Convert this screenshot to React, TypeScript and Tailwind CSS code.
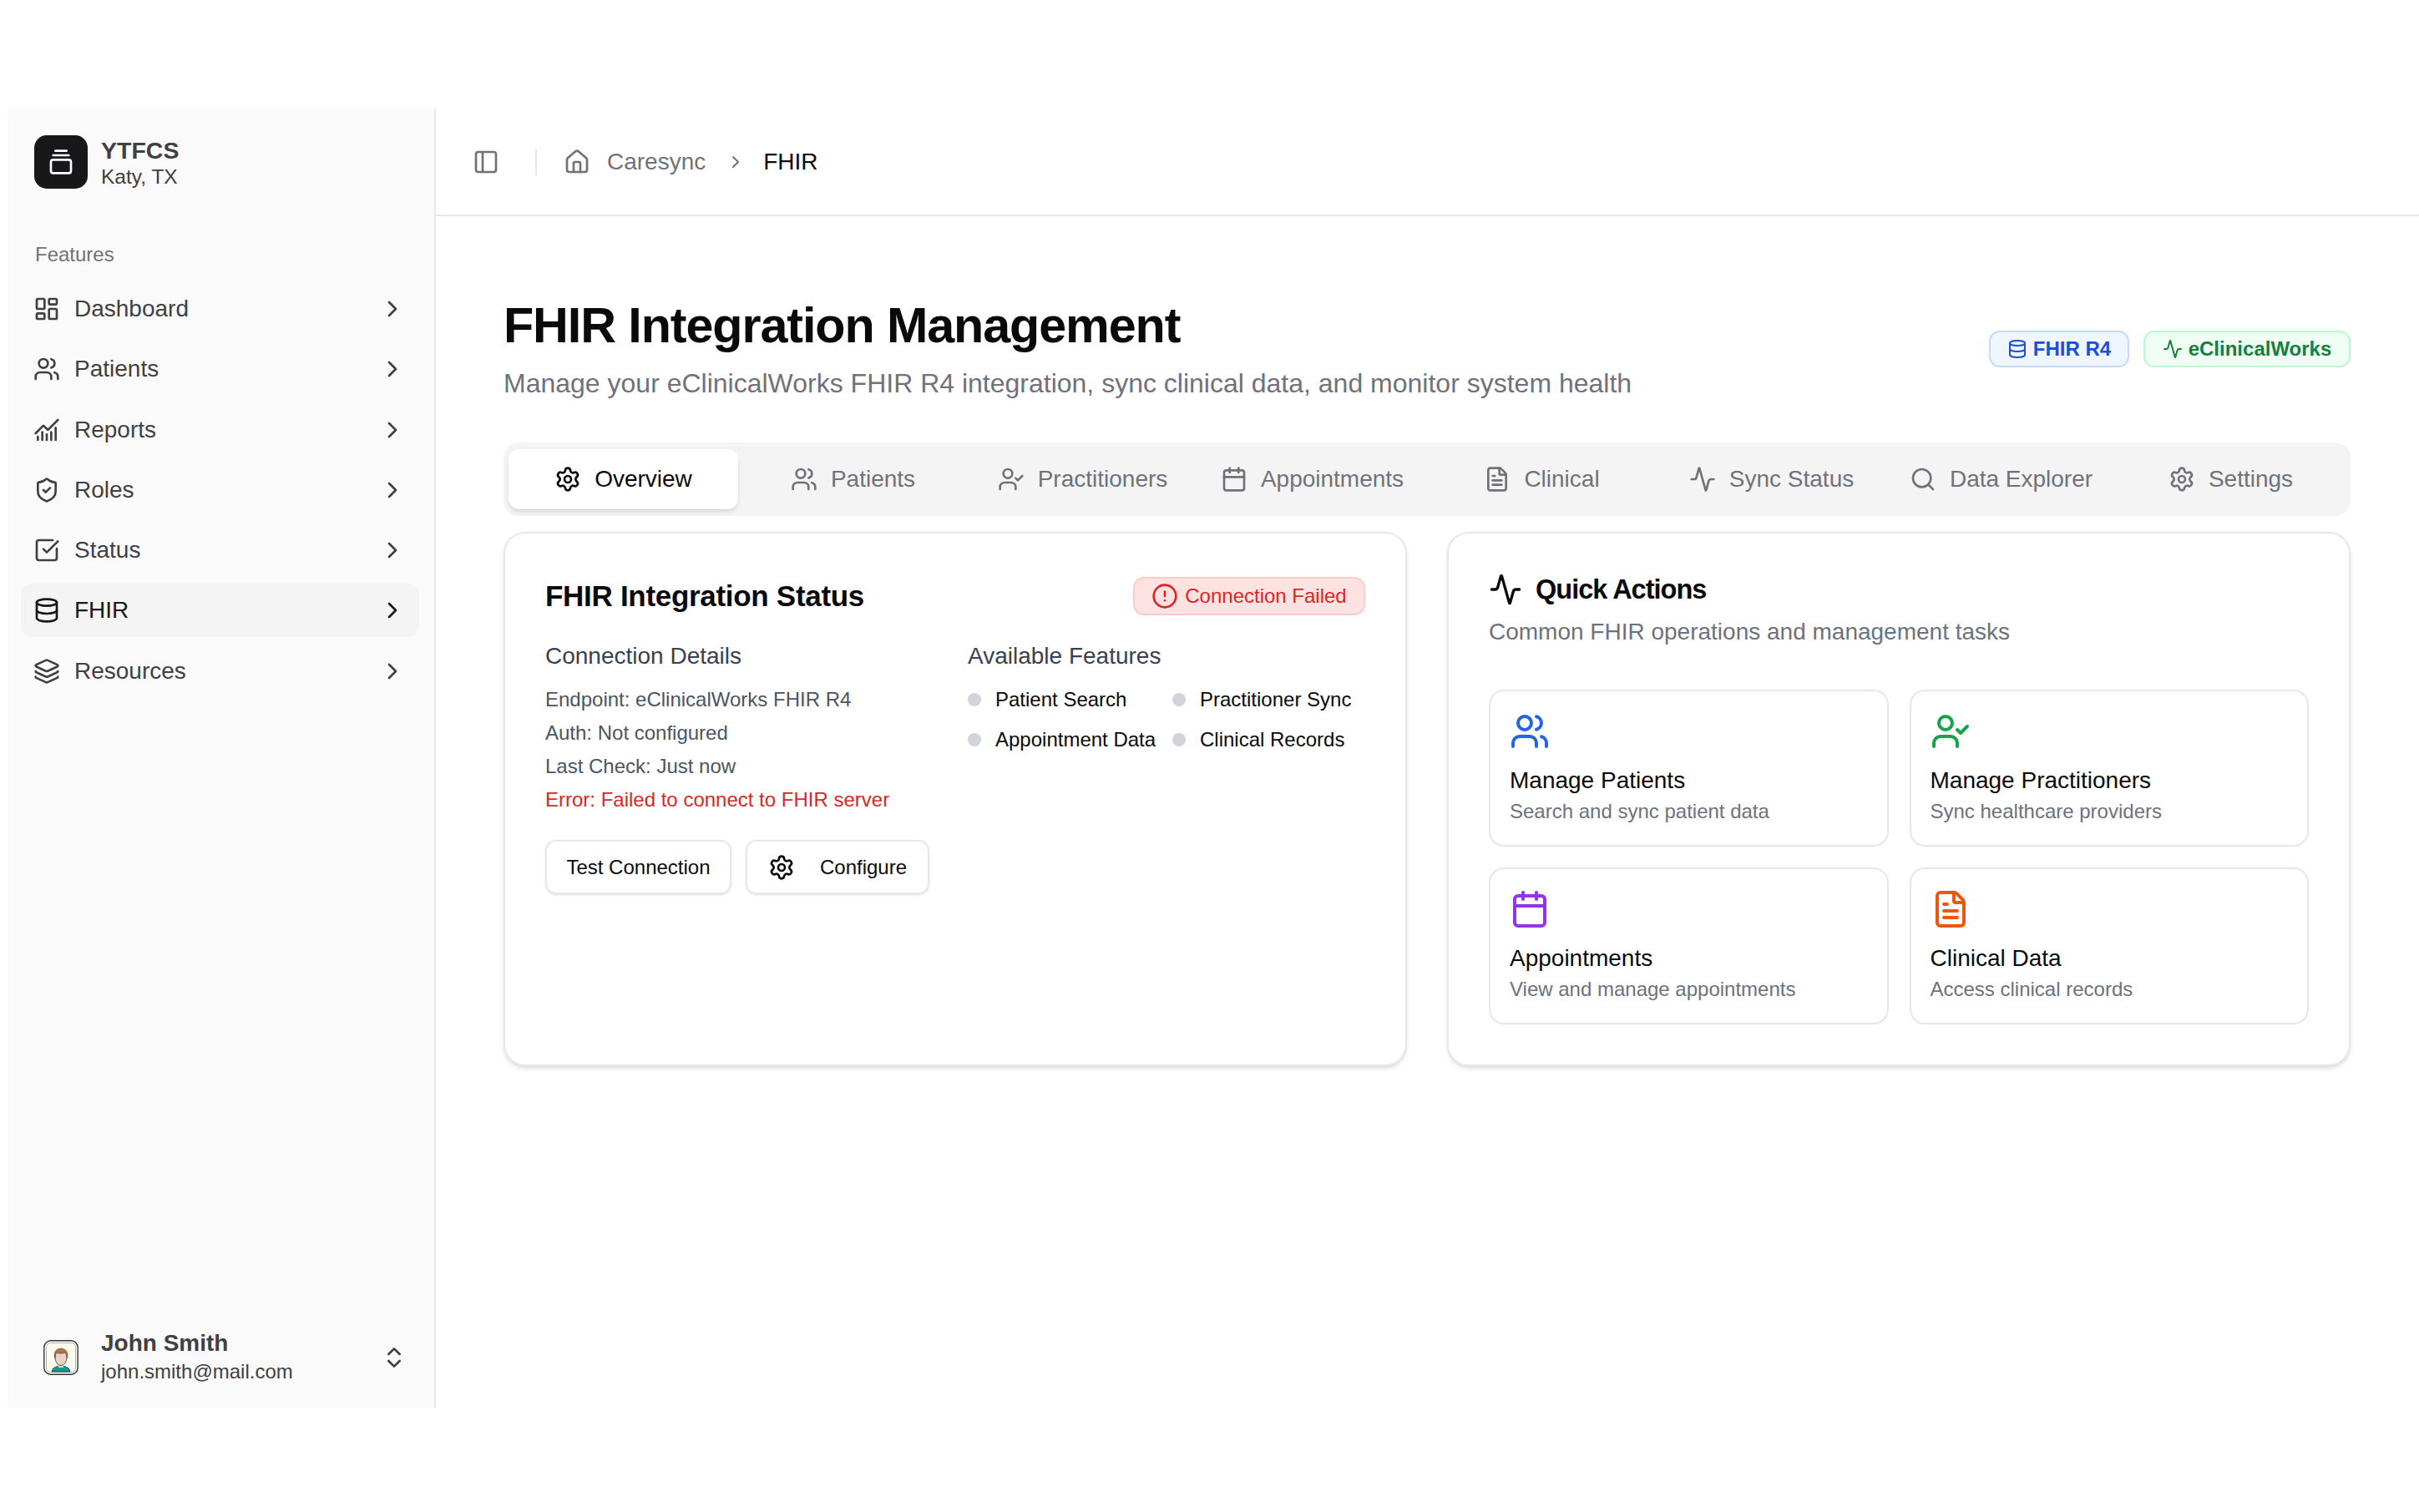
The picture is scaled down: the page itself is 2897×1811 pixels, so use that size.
import {
  Activity,
  Calendar,
  ChartNoAxesCombined,
  ChevronRight,
  ChevronsUpDown,
  CircleAlert,
  Database,
  FileText,
  GalleryVerticalEnd,
  House,
  Layers,
  LayoutDashboard,
  PanelLeft,
  Search,
  Settings,
  ShieldCheck,
  SquareCheckBig,
  UserCheck,
  Users,
} from "lucide-react"

const navItems = [
  { label: "Dashboard", icon: LayoutDashboard },
  { label: "Patients", icon: Users },
  { label: "Reports", icon: ChartNoAxesCombined },
  { label: "Roles", icon: ShieldCheck },
  { label: "Status", icon: SquareCheckBig },
  { label: "FHIR", icon: Database, active: true },
  { label: "Resources", icon: Layers },
]

const tabs = [
  { label: "Overview", icon: Settings, active: true },
  { label: "Patients", icon: Users },
  { label: "Practitioners", icon: UserCheck },
  { label: "Appointments", icon: Calendar },
  { label: "Clinical", icon: FileText },
  { label: "Sync Status", icon: Activity },
  { label: "Data Explorer", icon: Search },
  { label: "Settings", icon: Settings },
]

const details = ["Endpoint: eClinicalWorks FHIR R4", "Auth: Not configured", "Last Check: Just now"]

const features = ["Patient Search", "Practitioner Sync", "Appointment Data", "Clinical Records"]

const actions = [
  { title: "Manage Patients", sub: "Search and sync patient data", icon: Users, color: "text-[#2563eb]" },
  { title: "Manage Practitioners", sub: "Sync healthcare providers", icon: UserCheck, color: "text-[#16a34a]" },
  { title: "Appointments", sub: "View and manage appointments", icon: Calendar, color: "text-[#9333ea]" },
  { title: "Clinical Data", sub: "Access clinical records", icon: FileText, color: "text-[#ea580c]" },
]

function Avatar() {
  return (
    <svg width="42" height="42" viewBox="0 0 42 42" className="shrink-0">
      <rect x="0.8" y="0.8" width="40.4" height="40.4" rx="8" fill="#fffdf0" stroke="#2f3542" strokeWidth="1.4" />
      <rect x="3.500" y="3.500" width="35" height="35" rx="5" fill="none" stroke="#9a9ca3" strokeWidth="0.8" />
      <path d="M10 38c.5-4 3-5.500 7-6.500h8c4 1 6.500 2.500 7 6.500z" fill="#0f9d8f" stroke="#2f3542" strokeWidth="0.8" />
      <rect x="18" y="27" width="6" height="6" fill="#ecd3c0" />
      <ellipse cx="21" cy="21" rx="7" ry="9.500" fill="#ecd3c0" stroke="#2f3542" strokeWidth="0.8" />
      <path d="M13.500 22c-2-7 1.500-12 7.500-12s9.500 5 7.500 12c-.5-3.500-1.500-5.500-2.500-6.500-3 1-7.500 1-10 0-1.500 1-2 3-2.500 6.500z" fill="#b5713f" stroke="#2f3542" strokeWidth="0.4" />
    </svg>
  )
}

function Sidebar() {
  return (
    <aside className="flex w-[513px] shrink-0 flex-col border-r-2 border-[#e8e8e8] bg-[#fafafa]">
      <div className="flex items-center gap-4 pl-8 pt-8">
        <div className="flex h-16 w-16 items-center justify-center rounded-[15px] bg-[#18181b] text-white">
          <GalleryVerticalEnd size={32} />
        </div>
        <div className="text-[#3f3f46]">
          <div className="text-[28.500px] font-bold leading-[36px]">YTFCS</div>
          <div className="text-[24.500px] leading-[28px]">Katy, TX</div>
        </div>
      </div>

      <div className="mt-[63px] pl-[33px] text-[24px] leading-[32px] text-[#71717a]">Features</div>

      <nav className="mt-[17px] flex flex-col gap-[8.300px] pl-4 pr-[18px]">
        {navItems.map((item) => (
          <div
            key={item.label}
            className={`flex h-16 items-center gap-[17px] rounded-[13px] pl-[15px] pr-[16px] text-[28px] ${
              item.active ? "bg-[#f4f4f5] text-[#18181b]" : "text-[#3f3f46]"
            }`}
          >
            <item.icon size={32} strokeWidth={2} />
            <span className="flex-1">{item.label}</span>
            <ChevronRight size={32} />
          </div>
        ))}
      </nav>

      <div className="mt-auto flex items-center pb-[26px] pl-[43px] pr-[32px] text-[#3f3f46]">
        <Avatar />
        <div className="ml-[27px]">
          <div className="text-[28px] font-bold leading-[34px]">John Smith</div>
          <div className="text-[24px] leading-[34px]">john.smith@mail.com</div>
        </div>
        <ChevronsUpDown size={32} className="ml-auto" />
      </div>
    </aside>
  )
}

function Header() {
  return (
    <header className="flex h-[129px] items-center border-b-2 border-[#e5e7eb] pl-[44px]">
      <PanelLeft size={32} className="text-[#71717a]" />
      <div className="ml-[43px] h-[32px] w-[2px] bg-[#e5e7eb]" />
      <House size={32} className="ml-[32px] text-[#71717a]" />
      <span className="ml-[20px] text-[28px] text-[#71717a]">Caresync</span>
      <ChevronRight size={24} className="ml-[24px] text-[#71717a]" />
      <span className="ml-[21px] text-[28px] text-[#0a0a0a]">FHIR</span>
    </header>
  )
}

function Badges() {
  return (
    <div className="flex gap-[17px] text-[24px] font-bold">
      <div className="flex h-[44px] w-[168px] items-center justify-center gap-[7px] rounded-[13px] border-2 border-[#bfdbfe] bg-[#eff6ff] text-[#1d4ed8]">
        <Database size={24} />
        FHIR R4
      </div>
      <div className="flex h-[44px] w-[248px] items-center justify-center gap-[7px] rounded-[13px] border-2 border-[#bbf7d0] bg-[#f0fdf4] text-[#15803d]">
        <Activity size={24} />
        eClinicalWorks
      </div>
    </div>
  )
}

function Tabs() {
  return (
    <div className="mt-[51px] grid grid-cols-8 rounded-[18px] bg-[#f4f4f5] px-[6px] py-2">
      {tabs.map((tab) => (
        <div
          key={tab.label}
          className={`flex h-[72px] items-center justify-center gap-[16px] rounded-[13px] text-[28px] ${
            tab.active ? "bg-white text-[#0a0a0a] shadow-md" : "text-[#71717a]"
          }`}
        >
          <tab.icon size={32} />
          {tab.label}
        </div>
      ))}
    </div>
  )
}

function StatusCard() {
  return (
    <section className="rounded-[26px] border-2 border-[#e5e7eb] bg-white px-[48px] pt-[52px] shadow-md">
      <div className="flex items-center justify-between">
        <h2 className="text-[35px] font-bold leading-[46px] tracking-[-0.3px] text-[#0a0a0a]">FHIR Integration Status</h2>
        <div className="flex h-[46px] w-[278px] items-center justify-center gap-[8px] rounded-[13px] border-2 border-[#fecaca] bg-[#fee2e2] text-[24px] text-[#dc2626]">
          <CircleAlert size={32} />
          Connection Failed
        </div>
      </div>

      <div className="mt-[31px] grid grid-cols-2 gap-[30px]">
        <div>
          <h3 className="text-[28px] leading-[36px] text-[#374151]">Connection Details</h3>
          <div className="mt-[14px] text-[24px] leading-[40px] text-[#4b5563]">
            {details.map((line) => (
              <div key={line}>{line}</div>
            ))}
            <div className="text-[#dc2626]">Error: Failed to connect to FHIR server</div>
          </div>
        </div>
        <div>
          <h3 className="text-[28px] leading-[36px] text-[#374151]">Available Features</h3>
          <div className="mt-[19px] grid grid-cols-2 gap-x-[14px] gap-y-[18px]">
            {features.map((name) => (
              <div key={name} className="flex items-center gap-[17px] whitespace-nowrap text-[24px] leading-[30px] text-[#0a0a0a]">
                <span className="h-4 w-4 shrink-0 rounded-full bg-[#d1d5db]" />
                {name}
              </div>
            ))}
          </div>
        </div>
      </div>

      <div className="mt-[28px] flex gap-[17px] text-[24px] text-[#0a0a0a]">
        <div className="flex h-[65px] w-[223px] items-center justify-center rounded-[13px] border-2 border-[#e5e7eb] shadow-sm">
          Test Connection
        </div>
        <div className="flex h-[65px] w-[220px] items-center justify-center gap-[30px] rounded-[13px] border-2 border-[#e5e7eb] shadow-sm">
          <Settings size={32} />
          Configure
        </div>
      </div>
    </section>
  )
}

function QuickActions() {
  return (
    <section className="rounded-[26px] border-2 border-[#e5e7eb] bg-white px-[48px] pb-[48px] pt-[45px] shadow-md">
      <h2 className="flex h-[44px] items-center gap-[16px] text-[32.500px] font-bold tracking-[-1px] text-[#0a0a0a]">
        <Activity size={40} />
        Quick Actions
      </h2>
      <p className="mt-[9px] text-[28px] leading-[40px] text-[#6b7280]">Common FHIR operations and management tasks</p>
      <div className="mt-[49px] grid grid-cols-2 gap-[25px]">
        {actions.map((action) => (
          <div key={action.title} className="h-[188px] rounded-[18px] border-2 border-[#e5e7eb] px-[23px] pt-[24px]">
            <action.icon size={48} className={action.color} />
            <div className="mt-[17px] text-[28px] leading-[36px] text-[#0a0a0a]">{action.title}</div>
            <div className="mt-[3px] text-[24px] leading-[32px] text-[#6b7280]">{action.sub}</div>
          </div>
        ))}
      </div>
    </section>
  )
}

export default function App() {
  return (
    <div className="flex h-[1811px] w-full bg-white pb-[125px] pl-[9px] pt-[130px] font-['Liberation_Sans',Arial,sans-serif]">
      <Sidebar />
      <div className="flex-1">
        <Header />
        <main className="pl-[81px] pr-[82px] pt-[98px]">
          <div className="flex items-center justify-between">
            <div>
              <h1 className="text-[59.300px] font-bold leading-[66px] tracking-[-1.100px] text-[#0a0a0a]">
                FHIR Integration Management
              </h1>
              <p className="mt-[16px] text-[32px] leading-[40px] text-[#71717a]">
                Manage your eClinicalWorks FHIR R4 integration, sync clinical data, and monitor system health
              </p>
            </div>
            <Badges />
          </div>
          <Tabs />
          <div className="mt-[19px] grid grid-cols-2 gap-[48px]">
            <StatusCard />
            <QuickActions />
          </div>
        </main>
      </div>
    </div>
  )
}
